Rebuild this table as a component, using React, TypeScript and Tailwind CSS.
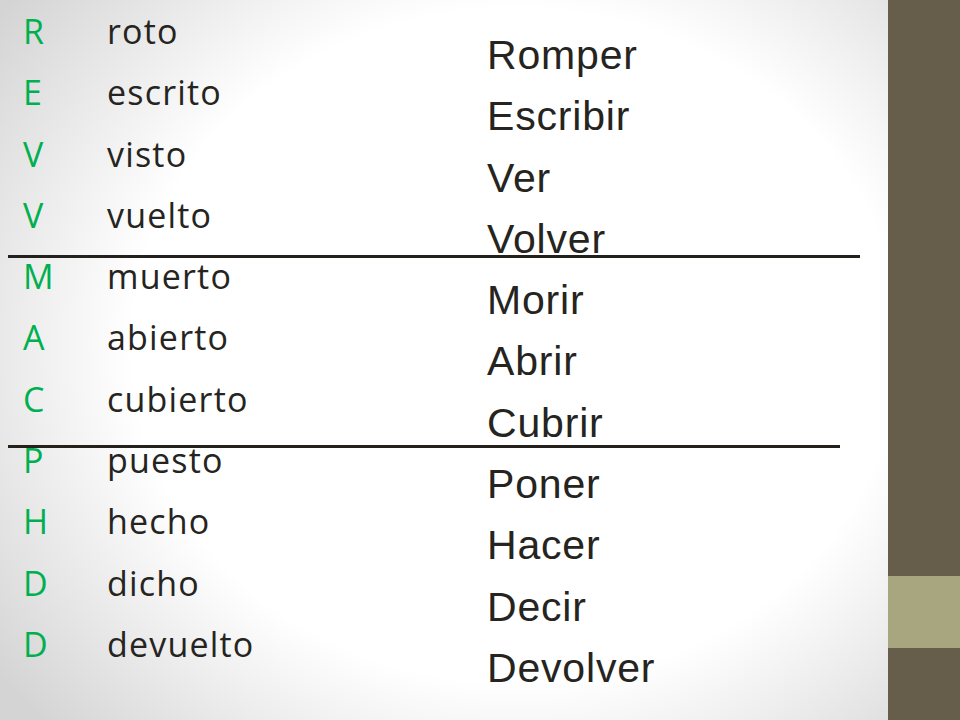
import React from 'react';

const rows = [
  ['R', 'roto', 'Romper'],
  ['E', 'escrito', 'Escribir'],
  ['V', 'visto', 'Ver'],
  ['V', 'vuelto', 'Volver'],
  ['M', 'muerto', 'Morir'],
  ['A', 'abierto', 'Abrir'],
  ['C', 'cubierto', 'Cubrir'],
  ['P', 'puesto', 'Poner'],
  ['H', 'hecho', 'Hacer'],
  ['D', 'dicho', 'Decir'],
  ['D', 'devuelto', 'Devolver'],
];

const App = () => {
  return (
    <div className="flex w-[960px] h-[720px] overflow-hidden">
      <div className="relative flex-1 flex bg-[radial-gradient(ellipse_72%_78%_at_58%_48%,#ffffff_60%,#d4d4d4_100%)]">
        <div className="flex pt-[1px] pl-[23px] text-[34px] leading-[61.3px] tracking-[0.035em] font-['Open_Sans',sans-serif]">
          <div className="w-[84px] text-[#00b050]">
            {rows.map((r, i) => (
              <div key={i}>{r[0]}</div>
            ))}
          </div>
          <div className="w-[380px] text-[#262420]">
            {rows.map((r, i) => (
              <div key={i}>{r[1]}</div>
            ))}
          </div>
        </div>
        <div className="pt-[25px] text-[41px] leading-[61.3px] tracking-[0.02em] text-[#262420] font-['Liberation_Sans',Arial,sans-serif]">
          {rows.map((r, i) => (
            <div key={i}>{r[2]}</div>
          ))}
        </div>
        <div className="absolute left-[8px] top-[255px] w-[852px] h-[3px] bg-[#24211c]" />
        <div className="absolute left-[8px] top-[445px] w-[832px] h-[3px] bg-[#24211c]" />
      </div>
      <div className="w-[72px] flex flex-col">
        <div className="h-[576px] bg-[#665e4a]" />
        <div className="h-[72px] bg-[#a8a67f]" />
        <div className="flex-1 bg-[#665e4a]" />
      </div>
    </div>
  );
};

export default App;
